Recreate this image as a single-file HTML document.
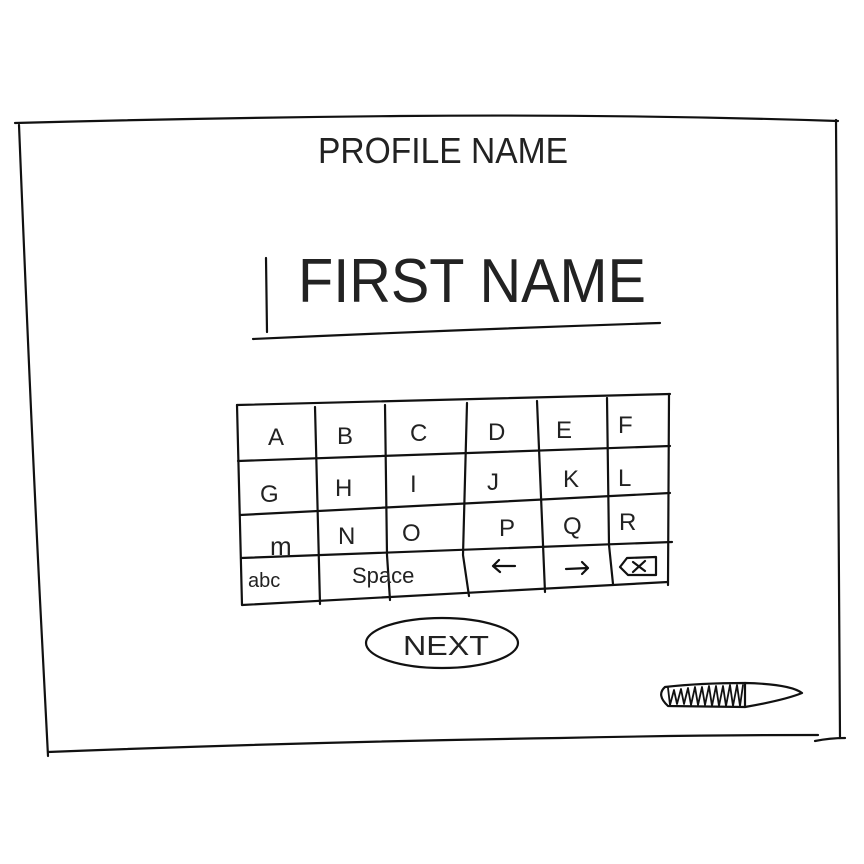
<!DOCTYPE html>
<html><head><meta charset="utf-8"><style>
html,body{margin:0;padding:0;background:#fff;width:864px;height:864px;overflow:hidden}
svg{display:block}
text{font-family:"Liberation Sans",sans-serif;fill:#111}
.thin{font-family:"Liberation Sans Narrow","Liberation Sans",sans-serif;fill:#222}
</style></head><body>
<svg width="864" height="864" viewBox="0 0 864 864" fill="none" stroke="#111" stroke-width="2.2" stroke-linecap="round" stroke-linejoin="round">
<!-- frame -->
<path d="M15 123 Q200 118 400 116 Q620 114 838 121"/>
<path d="M19 125 Q30 400 40 600 Q45 700 48 756"/>
<path d="M836 120 Q838 400 840 738"/>
<path d="M48 752 Q300 742 560 738 Q700 735 818 735"/>
<path d="M815 741 Q830 738 845 738"/>
<!-- title -->
<text class="thin" x="318" y="163" font-size="36" stroke="none" textLength="250" lengthAdjust="spacingAndGlyphs">PROFILE NAME</text>
<!-- input -->
<path d="M266 258 L267 332"/>
<text class="thin" x="298" y="302" font-size="62" stroke="none" textLength="348" lengthAdjust="spacingAndGlyphs">FIRST NAME</text>
<path d="M253 339 Q450 330 660 323"/>
<!-- keyboard -->
<path d="M237 405 L670 394"/>
<path d="M237 405 L242 605"/>
<path d="M669 394 L668 585"/>
<path d="M242 605 L668 582"/>
<path d="M238 461 L670 446"/>
<path d="M240 515 L670 493"/>
<path d="M241 558 L672 542"/>
<path d="M315 407 L320 604"/>
<path d="M385 405 L387 555 L390 600"/>
<path d="M467 403 L463 555 L469 596"/>
<path d="M537 401 L545 592"/>
<path d="M607 398 L609 545 L613 584"/>
<g stroke="none" font-size="24" class="thin">
<text class="thin" x="268" y="445">A</text><text class="thin" x="337" y="444">B</text><text class="thin" x="410" y="441">C</text>
<text class="thin" x="488" y="440">D</text><text class="thin" x="556" y="438">E</text><text class="thin" x="618" y="433">F</text>
<text class="thin" x="260" y="502">G</text><text class="thin" x="335" y="496">H</text><text class="thin" x="410" y="492">I</text>
<text class="thin" x="487" y="490">J</text><text class="thin" x="563" y="487">K</text><text class="thin" x="618" y="486">L</text>
<text class="thin" x="270" y="555" font-size="26">m</text><text class="thin" x="338" y="544">N</text><text class="thin" x="402" y="541">O</text>
<text class="thin" x="499" y="536">P</text><text class="thin" x="563" y="534">Q</text><text class="thin" x="619" y="530">R</text>
<text class="thin" x="248" y="587" font-size="20">abc</text><text class="thin" x="352" y="583" font-size="22">Space</text>
</g>
<path d="M493 566 L515 566 M493 566 L499 560 M493 566 L500 572"/>
<path d="M566 569 L588 568 M588 568 L582 562 M588 568 L582 574"/>
<path d="M620 567 L627 558 L656 557 L656 575 L628 575 Z"/>
<path d="M633 562 L645 571 M645 561 L633 572"/>
<!-- next -->
<ellipse cx="442" cy="643" rx="76" ry="25"/>
<text class="thin" x="403" y="655" font-size="28" stroke="none" textLength="86" lengthAdjust="spacingAndGlyphs">NEXT</text>
<!-- slider -->
<path d="M745 683 Q790 684 802 693 Q785 700 745 707 L668 706 Q656 695 665 687 Q700 683 745 683 Z"/>
<path d="M745 683 L745 707"/>
<path d="M668 688 L670 705 L674 690 L677 704 L681 689 L684 704 L688 688 L691 705 L695 687 L698 705 L702 687 L705 705 L709 686 L712 706 L716 686 L719 706 L723 686 L726 706 L730 685 L733 706 L737 685 L740 706 L743 685" stroke-width="1.8"/>
</svg>
</body></html>
